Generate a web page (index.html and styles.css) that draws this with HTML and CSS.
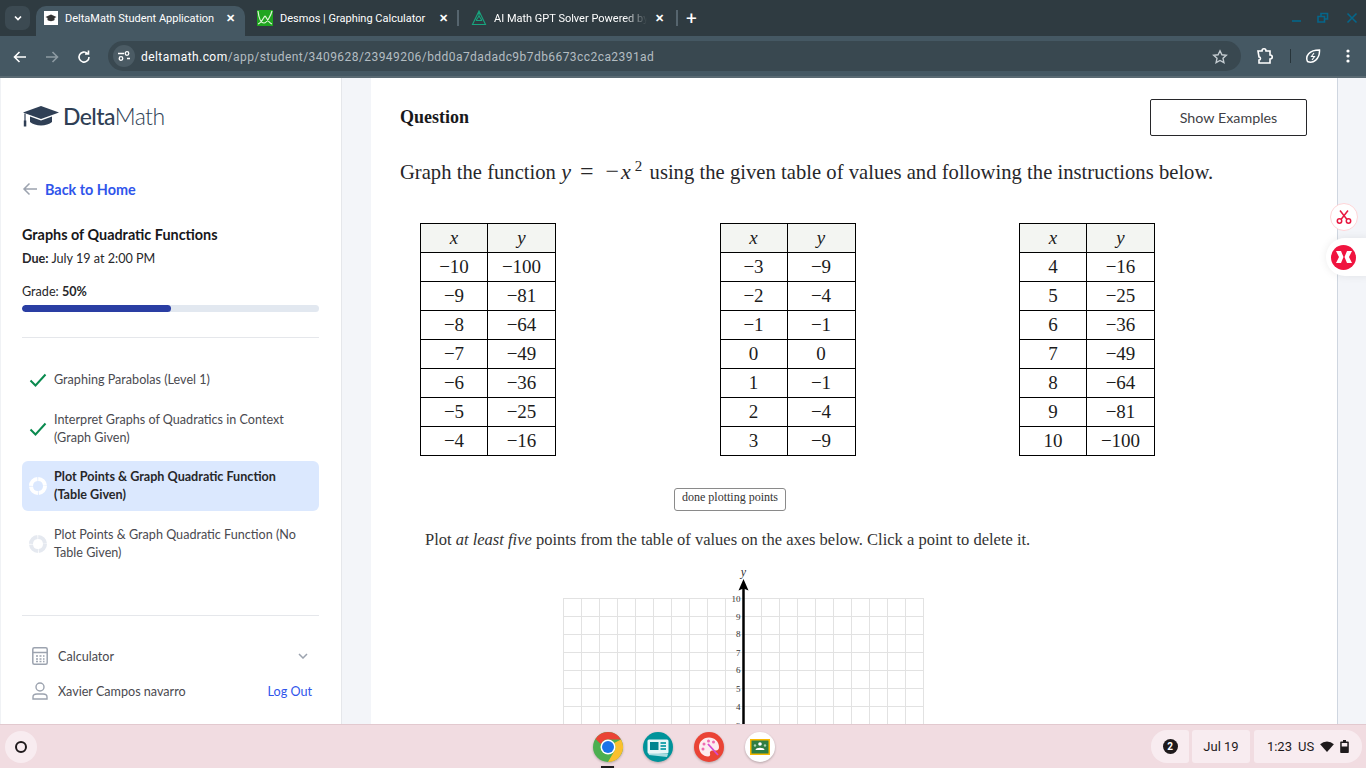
FILE: index.html
```html
<!DOCTYPE html>
<html lang="en">
<head>
    <meta charset="UTF-8">
    <meta name="viewport" content="width=device-width, initial-scale=1.0">
    <title>DeltaMath Student Application</title>
    <link rel="stylesheet" href="styles.css">
</head>
<body>
<div class="screen">
    <!-- Browser tabs -->
    <div class="tabstrip">
        <div class="tab-search">
            <svg width="10" height="10" viewBox="0 0 10 10"><path d="M2 3.500l3 3 3-3" fill="none" stroke="#fff" stroke-width="1.700"/></svg>
        </div>
        <div class="tab tab-active">
            <span class="favicon favicon-white">
                <svg width="12" height="10" viewBox="0 0 24 18"><path d="M12 2L1 7l4 2v4c3 3 11 3 14 0V9l4-2z" fill="#333"/></svg>
            </span>
            <span class="tab-title">DeltaMath Student Application</span>
            <span class="tab-close">&#10005;</span>
        </div>
        <div class="tab tab-desmos">
            <span class="favicon">
                <svg width="16" height="16" viewBox="0 0 16 16"><rect width="16" height="16" fill="#1fa51f"/><path d="M1 1c1 9 3 12 6 12S14 5 15 1M1 14c4-1 6-8 7-8s3 7 7 8" fill="none" stroke="#dff5d8" stroke-width="1.200"/></svg>
            </span>
            <span class="tab-title">Desmos | Graphing Calculator</span>
            <span class="tab-close">&#10005;</span>
        </div>
        <div class="tab-sep"></div>
        <div class="tab tab-ai">
            <span class="favicon">
                <svg width="16" height="16" viewBox="0 0 16 16"><path d="M8 1L1.500 14.500h13zM8 1v5M5 10.500h6M8 6l-3 4.500M8 6l3 4.500" fill="none" stroke="#18a57e" stroke-width="1.100"/></svg>
            </span>
            <span class="tab-title tab-fade">AI Math GPT Solver Powered by</span>
            <span class="tab-close">&#10005;</span>
        </div>
        <div class="tab-sep tab-sep-two"></div>
        <div class="tab-new">+</div>
        <div class="window-btns">
            <svg width="12" height="12" viewBox="0 0 12 12"><path d="M1 9h9" stroke="#05668a" stroke-width="1.600"/></svg>
            <svg width="12" height="12" viewBox="0 0 12 12"><path d="M1 4.500h6.500V10H1zM4 4V1.500h6.500V7H8" fill="none" stroke="#05668a" stroke-width="1.600"/></svg>
            <svg class="window-close" width="12" height="12" viewBox="0 0 12 12"><path d="M1.500 1.500l9 9M10.500 1.500l-9 9" stroke="#05668a" stroke-width="1.600"/></svg>
        </div>
    </div>

    <!-- Toolbar -->
    <div class="toolbar">
        <svg class="nav-icon" width="16" height="16" viewBox="0 0 16 16"><path d="M14 8H3M7.500 3L2.500 8l5 5" fill="none" stroke="#fff" stroke-width="1.600"/></svg>
        <svg class="nav-icon" width="16" height="16" viewBox="0 0 16 16"><path d="M2 8h11M8.500 3l5 5-5 5" fill="none" stroke="#8d9aa2" stroke-width="1.600"/></svg>
        <svg class="nav-icon" width="16" height="16" viewBox="0 0 16 16"><path d="M13 8a5 5 0 1 1-1.500-3.500M12.500 1.500V5H9" fill="none" stroke="#fff" stroke-width="1.600"/></svg>
        <div class="omnibox">
            <span class="site-info">
                <svg width="14" height="14" viewBox="0 0 14 14"><path d="M1 4.500h6M10 9.500h3" stroke="#fff" stroke-width="1.300"/><circle cx="10" cy="4.500" r="1.800" fill="none" stroke="#fff" stroke-width="1.300"/><circle cx="4" cy="9.500" r="1.800" fill="none" stroke="#fff" stroke-width="1.300"/></svg>
            </span>
            <span class="url"><span class="url-host">deltamath.com</span>/app/student/3409628/23949206/bdd0a7dadadc9b7db6673cc2ca2391ad</span>
            <svg class="star" width="16" height="16" viewBox="0 0 16 16"><path d="M8 1.800l1.900 4 4.400.5-3.300 3 .9 4.400L8 11.500l-3.900 2.200.9-4.400-3.300-3 4.400-.5z" fill="none" stroke="#c4ccd1" stroke-width="1.400"/></svg>
        </div>
        <svg class="puzzle" width="18" height="18" viewBox="0 0 18 18"><path d="M2 4h4c0-3 4-3 4 0h4v4c3 0 3 4 0 4v4H3v-3c2 0 2-3 0-3z" fill="none" stroke="#fff" stroke-width="1.600"/></svg>
        <div class="toolbar-sep"></div>
        <svg class="leaf" width="16" height="16" viewBox="0 0 16 16"><path d="M2.500 13.500C0 8 4 2 14.500 2 15 11 8 16 2.500 13.500z" fill="none" stroke="#fff" stroke-width="1.500"/><path d="M9 5L6.500 8.500h3L7 12" fill="none" stroke="#fff" stroke-width="1.100"/></svg>
        <svg class="dots" width="4" height="14" viewBox="0 0 4 14"><circle cx="2" cy="2" r="1.600" fill="#fff"/><circle cx="2" cy="7" r="1.600" fill="#fff"/><circle cx="2" cy="12" r="1.600" fill="#fff"/></svg>
    </div>

    <div class="page">
        <aside class="sidebar">
            <div class="logo">
                <svg width="38" height="22" viewBox="0 0 38 22"><path d="M19 1L1 7.500 19 14l18-6.500z" fill="#2f3f55"/><path d="M8 11.500V17c5 4.500 17 4.500 22 0v-5.500l-11 4z" fill="#2f3f55"/><path d="M3 8.500V16" stroke="#2f3f55" stroke-width="1.200"/><rect x="1.800" y="15.500" width="2.500" height="6" fill="#2f3f55"/></svg>
                <span class="logo-text"><span class="logo-strong">Delta</span>Math</span>
            </div>
            <a class="back-link">
                <svg width="16" height="14" viewBox="0 0 16 14"><path d="M15 7H2M7.500 1.500L2 7l5.500 5.500" fill="none" stroke="#9ca3af" stroke-width="1.500"/></svg>
                Back to Home
            </a>
            <h2 class="assign-title">Graphs of Quadratic Functions</h2>
            <div class="due"><b>Due:</b> July 19 at 2:00 PM</div>
            <div class="grade">Grade: <b>50%</b></div>
            <div class="progress"><div class="progress-fill" style="width: 50%"></div></div>

            <ul class="problem-list">
                <li class="problem">
                    <svg class="check" width="18" height="14" viewBox="0 0 18 14"><path d="M1.500 7.500l5 5L16.500 1.500" fill="none" stroke="#0a8a4f" stroke-width="2"/></svg>
                    <span>Graphing Parabolas (Level 1)</span>
                </li>
                <li class="problem">
                    <svg class="check" width="18" height="14" viewBox="0 0 18 14"><path d="M1.500 7.500l5 5L16.500 1.500" fill="none" stroke="#0a8a4f" stroke-width="2"/></svg>
                    <span>Interpret Graphs of Quadratics in Context (Graph Given)</span>
                </li>
                <li class="problem problem-active">
                    <svg class="ring" width="18" height="18" viewBox="0 0 18 18"><circle cx="9" cy="9" r="7" fill="none" stroke="#fff" stroke-width="4" stroke-dasharray="10.200 0.800"/></svg>
                    <span>Plot Points &amp; Graph Quadratic Function (Table Given)</span>
                </li>
                <li class="problem">
                    <svg class="ring" width="18" height="18" viewBox="0 0 18 18"><circle cx="9" cy="9" r="7" fill="none" stroke="#e5e9f0" stroke-width="4" stroke-dasharray="10.200 0.800"/></svg>
                    <span>Plot Points &amp; Graph Quadratic Function (No Table Given)</span>
                </li>
            </ul>

            <div class="side-footer">
                <div class="footer-row">
                    <svg width="16" height="18" viewBox="0 0 16 18"><rect x="0.800" y="0.800" width="14.400" height="16.400" rx="1.500" fill="none" stroke="#9ca3af" stroke-width="1.500"/><path d="M1 5.500h14" stroke="#9ca3af" stroke-width="1.500"/><path d="M4 9h2M7.500 9h2M11 9h1.500M4 12h2M7.500 12h2M11 12h1.500M4 14.500h2M7.500 14.500h2M11 14.500h1.500" stroke="#9ca3af" stroke-width="1.500"/></svg>
                    <span class="footer-label">Calculator</span>
                    <svg class="chevron" width="10" height="6" viewBox="0 0 10 6"><path d="M1 1l4 4 4-4" fill="none" stroke="#9ca3af" stroke-width="1.500"/></svg>
                </div>
                <div class="footer-row">
                    <svg width="16" height="18" viewBox="0 0 16 18"><circle cx="8" cy="5" r="4" fill="none" stroke="#9ca3af" stroke-width="1.400"/><path d="M1 17v-2c0-2 2-3 4-3h6c2 0 4 1 4 3v2z" fill="none" stroke="#9ca3af" stroke-width="1.400"/></svg>
                    <span class="footer-label">Xavier Campos navarro</span>
                    <a class="logout">Log Out</a>
                </div>
            </div>
        </aside>

        <main class="content">
            <div class="question-head">
                <h3>Question</h3>
                <button class="show-examples">Show Examples</button>
            </div>
            <p class="prompt">Graph the function <i>y</i><span class="eq">=</span><span class="minus">&minus;</span><i>x</i><sup>2</sup> using the given table of values and following the instructions below.</p>

            <div class="tables">
                <table class="values">
                    <tr><th><i>x</i></th><th><i>y</i></th></tr>
                    <tr><td>&minus;10</td><td>&minus;100</td></tr>
                    <tr><td>&minus;9</td><td>&minus;81</td></tr>
                    <tr><td>&minus;8</td><td>&minus;64</td></tr>
                    <tr><td>&minus;7</td><td>&minus;49</td></tr>
                    <tr><td>&minus;6</td><td>&minus;36</td></tr>
                    <tr><td>&minus;5</td><td>&minus;25</td></tr>
                    <tr><td>&minus;4</td><td>&minus;16</td></tr>
                </table>
                <table class="values">
                    <tr><th><i>x</i></th><th><i>y</i></th></tr>
                    <tr><td>&minus;3</td><td>&minus;9</td></tr>
                    <tr><td>&minus;2</td><td>&minus;4</td></tr>
                    <tr><td>&minus;1</td><td>&minus;1</td></tr>
                    <tr><td>0</td><td>0</td></tr>
                    <tr><td>1</td><td>&minus;1</td></tr>
                    <tr><td>2</td><td>&minus;4</td></tr>
                    <tr><td>3</td><td>&minus;9</td></tr>
                </table>
                <table class="values">
                    <tr><th><i>x</i></th><th><i>y</i></th></tr>
                    <tr><td>4</td><td>&minus;16</td></tr>
                    <tr><td>5</td><td>&minus;25</td></tr>
                    <tr><td>6</td><td>&minus;36</td></tr>
                    <tr><td>7</td><td>&minus;49</td></tr>
                    <tr><td>8</td><td>&minus;64</td></tr>
                    <tr><td>9</td><td>&minus;81</td></tr>
                    <tr><td>10</td><td>&minus;100</td></tr>
                </table>
            </div>

            <div class="done-row"><button class="done-btn">done plotting points</button></div>
            <p class="instructions">Plot <i>at least five</i> points from the table of values on the axes below. Click a point to delete it.</p>

            <svg class="graph" width="364" height="170" viewBox="0 -10 364 170">
                <g stroke="#e2e2e2" stroke-width="1">
                    <path d="M.5 28.500V160M18.500 28.500V160M36.500 28.500V160M54.500 28.500V160M72.500 28.500V160M90.500 28.500V160M108.500 28.500V160M126.500 28.500V160M144.500 28.500V160M162.500 28.500V160M198.500 28.500V160M216.500 28.500V160M234.500 28.500V160M252.500 28.500V160M270.500 28.500V160M288.500 28.500V160M306.500 28.500V160M324.500 28.500V160M342.500 28.500V160M360.500 28.500V160"/>
                    <path d="M0 28.500H361M0 46.500H361M0 64.500H361M0 82.500H361M0 100.500H361M0 118.500H361M0 136.500H361M0 154.500H361"/>
                </g>
                <path d="M180.500 14V160" stroke="#000" stroke-width="2.500"/>
                <path d="M180.500 9l-5 11.500 5-2 5 2z" fill="#000"/>
                <g class="graph-labels">
                    <text x="180.500" y="6" class="axis-name">y</text>
                    <text x="177.500" y="31.500" text-anchor="end">10</text>
                    <text x="177.500" y="50" text-anchor="end">9</text>
                    <text x="177.500" y="67" text-anchor="end">8</text>
                    <text x="177.500" y="86" text-anchor="end">7</text>
                    <text x="177.500" y="103" text-anchor="end">6</text>
                    <text x="177.500" y="122" text-anchor="end">5</text>
                    <text x="177.500" y="140" text-anchor="end">4</text>
                    <text x="177.500" y="159" text-anchor="end">3</text>
                </g>
            </svg>
        </main>

        <div class="right-band"></div>

        <!-- Floating extension buttons -->
        <div class="float-scissors">
            <svg width="16" height="16" viewBox="0 0 16 16"><g fill="none" stroke="#e8173f" stroke-width="1.500"><circle cx="3.500" cy="12" r="2.200"/><circle cx="12.500" cy="12" r="2.200"/><path d="M5 10.500L12 1.500M11 10.500L4 1.500"/></g></svg>
        </div>
        <div class="float-red">
            <div class="red-dot">
                <svg width="18" height="14" viewBox="0 0 18 14"><path d="M1 1h5l2.500 6L6 13H1l3-6zM17 1h-5L9.500 7l2.500 6h5l-3-6z" fill="#fff"/></svg>
            </div>
        </div>
    </div>

    <!-- ChromeOS shelf -->
    <footer class="shelf">
        <div class="launcher"><span class="launcher-ring"></span></div>
        <div class="shelf-apps">
            <div class="app app-current">
                <svg width="32" height="32" viewBox="0 0 32 32">
                    <circle cx="16" cy="16" r="15" fill="#4caf50"/>
                    <path d="M16 1a15 15 0 0 1 13 7.500H16a7.500 7.500 0 0 0-7 4.800L3.500 8A15 15 0 0 1 16 1z" fill="#ea4335"/>
                    <path d="M29 8.500A15 15 0 0 1 16 31l6.500-11.200A7.500 7.500 0 0 0 22 12z" fill="#fbc02d"/>
                    <circle cx="16" cy="16" r="7.500" fill="#fff"/>
                    <circle cx="16" cy="16" r="6" fill="#1a73e8"/>
                </svg>
            </div>
            <div class="app">
                <svg width="32" height="32" viewBox="0 0 32 32">
                    <circle cx="16" cy="16" r="15" fill="#00939a"/>
                    <path d="M6 21l1 3 18 2 1-3z" fill="#a7dce0"/>
                    <rect x="5.500" y="8.500" width="21" height="14" rx="1.500" fill="#e8f6f7"/>
                    <rect x="8" y="11" width="8.500" height="8" fill="#00838f"/>
                    <path d="M18.500 12h5.500M18.500 15h5.500M18.500 18h5.500" stroke="#26a6b0" stroke-width="1.800"/>
                </svg>
            </div>
            <div class="app">
                <svg width="32" height="32" viewBox="0 0 32 32">
                    <circle cx="16" cy="16" r="15" fill="#ea4335"/>
                    <path d="M16 6.500C10 6.500 6 11 6 16s4 9.500 9 9.500c2 0 2.500-1.500 2-3s.5-3 2.500-3H23c2 0 3-1.500 3-3.500 0-5.500-4.500-9.500-10-9.500z" fill="#fdecef"/>
                    <circle cx="11" cy="13" r="1.500" fill="#f06ab0"/>
                    <circle cx="15.500" cy="10" r="1.500" fill="#f06ab0"/>
                    <circle cx="20.500" cy="11" r="1.500" fill="#f06ab0"/>
                    <circle cx="10" cy="18" r="1.500" fill="#f06ab0"/>
                    <path d="M15 13l10 11" stroke="#d54ad0" stroke-width="1.800"/>
                </svg>
            </div>
            <div class="app">
                <svg width="32" height="32" viewBox="0 0 32 32">
                    <circle cx="16" cy="16" r="15" fill="#fff"/>
                    <rect x="6" y="8" width="20" height="16" fill="#f5b800"/>
                    <rect x="7.500" y="9.500" width="17" height="13" fill="#2e7d43"/>
                    <circle cx="16" cy="13" r="1.800" fill="#fff"/>
                    <path d="M11.500 19c0-3 9-3 9 0z" fill="#fff"/>
                    <circle cx="11" cy="14.500" r="1.200" fill="#a9d3b2"/>
                    <circle cx="21" cy="14.500" r="1.200" fill="#a9d3b2"/>
                </svg>
            </div>
        </div>
        <div class="tray">
            <div class="pill pill-left"><span class="badge">2</span></div>
            <div class="pill pill-date">Jul 19</div>
            <div class="pill pill-right">
                <span>1:23</span><span>US</span>
                <svg width="14" height="11" viewBox="0 0 15 12"><path d="M0 3.500a11 11 0 0 1 15 0L7.500 12z" fill="#1f1a1c"/></svg>
                <svg width="9" height="13" viewBox="0 0 9 13"><path d="M3 0h3v1.500h2a.8.800 0 0 1 .8.800v10a.8.800 0 0 1-.8.700H1a.8.800 0 0 1-.8-.700v-10A.8.800 0 0 1 1 1.500h2z" fill="#1f1a1c"/><rect x="1.700" y="3" width="5.600" height="3.500" fill="#f8ecf0"/></svg>
            </div>
        </div>
    </footer>
</div>
</body>
</html>
```

FILE: styles.css
```css
html, body {
    margin: 0;
    padding: 0;
    overflow: hidden;
}

.screen {
    width: 1366px;
    height: 768px;
    display: flex;
    flex-direction: column;
    overflow: hidden;
    background-color: #fff;
}

/* Browser tabs */
.tabstrip {
    height: 36px;
    flex: none;
    display: flex;
    align-items: flex-end;
    background-color: #2f3b41;
    font-family: Roboto, sans-serif;
    font-size: 11px;
    color: #fff;
    position: relative;
}

.tab-search {
    width: 25px;
    height: 24px;
    margin: 0 6px 6px 5px;
    border-radius: 7px;
    background-color: #3c4a52;
    display: flex;
    align-items: center;
    justify-content: center;
}

.tab {
    height: 30px;
    display: flex;
    align-items: center;
    box-sizing: border-box;
    padding-bottom: 6px;
}

.tab-active {
    width: 209px;
    padding-left: 8px;
    padding-right: 10px;
    background-color: #455863;
    border-radius: 10px 10px 0 0;
}

.tab-desmos {
    width: 212px;
    padding-left: 12px;
    padding-right: 9px;
}

.tab-ai {
    width: 212px;
    padding-left: 12px;
    padding-right: 7px;
}

.favicon {
    width: 16px;
    height: 16px;
    margin-right: 7px;
    flex: none;
    display: flex;
    align-items: center;
    justify-content: center;
}

.favicon-white {
    width: 14px;
    height: 14px;
    margin-right: 7px;
    background-color: #fff;
}

.tab-title {
    flex: 1;
    white-space: nowrap;
    overflow: hidden;
}

.tab-fade {
    -webkit-mask-image: linear-gradient(to right, #000 85%, transparent 100%);
    mask-image: linear-gradient(to right, #000 85%, transparent 100%);
}

.tab-close {
    font-size: 11px;
    font-weight: bold;
    flex: none;
    margin-left: 8px;
}

.tab-sep {
    width: 2px;
    height: 16px;
    margin-bottom: 10px;
    background-color: #56656e;
    flex: none;
}

.tab-sep-two {
    margin-left: 5px;
}

.tab-new {
    font-size: 19px;
    line-height: 26px;
    height: 30px;
    margin-left: 8px;
}

.window-btns {
    margin-left: auto;
    height: 36px;
    display: flex;
    align-items: center;
    gap: 14px;
    padding-right: 8px;
}

.window-close {
    margin-left: 3px;
}

/* Toolbar */
.toolbar {
    height: 42px;
    flex: none;
    box-sizing: border-box;
    display: flex;
    align-items: center;
    padding: 0 16px 0 12px;
    background-color: #455863;
    border-bottom: 2px solid #5a6a73;
}

.nav-icon {
    margin-right: 16px;
    margin-top: 1px;
    flex: none;
}

.omnibox {
    width: 1133px;
    height: 30px;
    border-radius: 15px;
    background-color: #394850;
    display: flex;
    align-items: center;
    flex: none;
    font-family: Roboto, sans-serif;
    font-size: 12px;
    color: #b4bdc2;
}

.site-info {
    width: 22px;
    height: 22px;
    margin: 0 6px 0 5px;
    border-radius: 50%;
    background-color: #4b5b64;
    display: flex;
    align-items: center;
    justify-content: center;
}

.url {
    letter-spacing: 0.44px;
    white-space: nowrap;
    padding-top: 1px;
}

.url-host {
    color: #fff;
}

.star {
    margin-left: auto;
    margin-right: 13px;
    margin-top: 1px;
}

.puzzle {
    margin-left: 15px;
    flex: none;
}

.toolbar-sep {
    width: 1px;
    height: 14px;
    margin: 0 16px;
    background-color: #27343a;
    flex: none;
}

.leaf {
    flex: none;
    margin-left: -2px;
}

.dots {
    margin-left: 25px;
    flex: none;
}

/* Page area */
.page {
    flex: 1;
    display: flex;
    position: relative;
    overflow: hidden;
    background-color: #f3f5f9;
    min-height: 0;
}

.sidebar {
    width: 342px;
    flex: none;
    box-sizing: border-box;
    padding: 0 22px 0 21px;
    background-color: #fff;
    border-left: 1px solid #f0f2f5;
    border-right: 1px solid #e5e7eb;
    font-family: Lato, sans-serif;
    color: #4a4a50;
    font-size: 12.600px;
    display: flex;
    flex-direction: column;
}

.logo {
    height: 24px;
    margin-top: 26px;
    display: flex;
    align-items: center;
    gap: 3px;
    color: #2f3f55;
}

.logo-text {
    font-size: 23px;
    font-weight: 300;
    letter-spacing: -0.6px;
}

.logo-strong {
    font-weight: 500;
}

.back-link {
    margin-top: 50px;
    height: 22px;
    display: flex;
    align-items: center;
    gap: 7px;
    color: #2f55eb;
    font-size: 14.400px;
    font-weight: 700;
}

.assign-title {
    margin: 25px 0 0;
    font-size: 14.400px;
    line-height: 20px;
    font-weight: 700;
    color: #18181b;
}

.due {
    margin-top: 5px;
    line-height: 18px;
    color: #27272a;
}

.grade {
    margin-top: 15px;
    line-height: 18px;
    color: #27272a;
}

.progress {
    height: 7px;
    margin-top: 4px;
    border-radius: 4px;
    background-color: #e2e8f0;
    overflow: hidden;
}

.progress-fill {
    height: 100%;
    border-radius: 4px;
    background-color: #2a3ea3;
}

.problem-list {
    list-style: none;
    margin: 25px 0 0;
    padding: 26px 0 0;
    border-top: 1px solid #e5e7eb;
    display: flex;
    flex-direction: column;
    gap: 8px;
}

.problem {
    display: flex;
    align-items: center;
    padding: 7px 20px 7px 7px;
    line-height: 18px;
    border-radius: 6px;
}

.problem-active {
    margin-top: -1px;
    background-color: #dbe8fe;
    font-weight: 700;
    color: #27272a;
}

.problem svg {
    width: 18px;
    flex: none;
    margin-right: 7px;
}

.side-footer {
    margin-top: 46px;
    padding-top: 31px;
    border-top: 1px solid #e5e7eb;
    display: flex;
    flex-direction: column;
    gap: 17px;
}

.footer-row {
    height: 18px;
    display: flex;
    align-items: center;
    padding: 0 7px 0 10px;
}

.footer-label {
    margin-left: 10px;
    flex: 1;
}

.chevron {
    margin-right: 4px;
}

.logout {
    color: #2f55eb;
}

/* Question */
.content {
    width: 966px;
    margin-left: 29px;
    box-sizing: border-box;
    flex: none;
    padding: 21px 30px 0 29px;
    background-color: #fff;
    font-family: "Liberation Serif", serif;
    color: #27272a;
}

.question-head {
    height: 37px;
    display: flex;
    align-items: center;
    justify-content: space-between;
}

.question-head h3 {
    margin: 0;
    font-size: 18px;
    font-weight: 700;
    color: #18181b;
}

.show-examples {
    width: 157px;
    height: 37px;
    border: 1px solid #27272a;
    border-radius: 2px;
    background-color: #fff;
    font-family: Lato, sans-serif;
    font-size: 14.300px;
    color: #3f3f46;
}

.prompt {
    margin: 21px 0 0;
    font-size: 20.600px;
    line-height: 30px;
    white-space: nowrap;
    word-spacing: 0.15px;
}

.prompt i {
    font-size: 22px;
    letter-spacing: 1px;
}

.prompt sup {
    font-size: 15px;
    line-height: 0;
    margin-left: 3px;
    margin-right: 2px;
}

.eq {
    margin: 0 9px 0 8px;
    font-size: 24px;
    line-height: 0;
}

.minus {
    font-size: 24px;
    line-height: 0;
    margin-left: 3px;
    margin-right: 2px;
}

.tables {
    margin-top: 36px;
    padding-left: 20px;
    display: flex;
    gap: 163.500px;
}

.values {
    border-collapse: collapse;
    font-size: 19px;
    color: #1c1c1c;
}

.values th, .values td {
    width: 67px;
    height: 28px;
    padding: 0;
    border: 1px solid #000;
    text-align: center;
    font-weight: 400;
}

.values th:first-child, .values td:first-child {
    width: 66px;
}

.values th {
    background-color: #f3f5f2;
}

.done-row {
    margin-top: 31px;
    padding-left: 274px;
}

.done-btn {
    width: 112px;
    height: 23px;
    padding: 0 0 4px;
    border: 1px solid #8a8a8a;
    border-radius: 3px;
    background-color: #fff;
    font-family: "Liberation Serif", serif;
    font-size: 12px;
    color: #333;
}

.instructions {
    margin: 19px 0 0;
    padding-left: 25px;
    font-size: 16.500px;
    line-height: 20px;
    color: #333;
}

.graph {
    display: block;
    margin: 10px 0 0 163px;
}

.graph-labels text {
    font-family: "Liberation Serif", serif;
    font-size: 9px;
    fill: #333;
}

.graph-labels .axis-name {
    font-size: 12px;
    font-style: italic;
    text-anchor: middle;
}

.right-band {
    flex: 1;
    border-left: 1px solid #cfd6e0;
}

.float-scissors {
    position: absolute;
    left: 1330px;
    top: 125px;
    width: 28px;
    height: 28px;
    box-sizing: border-box;
    border: 1px solid #ffd5d8;
    border-radius: 50%;
    background-color: #fff;
    display: flex;
    align-items: center;
    justify-content: center;
}

.float-red {
    position: absolute;
    left: 1326px;
    top: 160px;
    width: 44px;
    height: 38px;
    border-radius: 19px 0 0 19px;
    background-color: #fff;
    box-shadow: 0 0 8px rgba(0, 0, 0, 0.08);
    display: flex;
    align-items: center;
    padding-left: 5px;
    box-sizing: border-box;
}

.red-dot {
    width: 25px;
    height: 25px;
    border-radius: 50%;
    background-color: #f0143f;
    display: flex;
    align-items: center;
    justify-content: center;
}

/* Shelf */
.shelf {
    height: 44px;
    flex: none;
    box-sizing: border-box;
    display: flex;
    align-items: center;
    background-color: #f1dce1;
    border-top: 1px solid #e2c9cf;
    font-family: Roboto, sans-serif;
    font-size: 13px;
    color: #1f1a1c;
    position: relative;
}

.launcher {
    width: 32px;
    height: 32px;
    margin-left: 5px;
    border-radius: 50%;
    background-color: #f8ecf0;
    display: flex;
    align-items: center;
    justify-content: center;
    flex: none;
}

.launcher-ring {
    width: 8px;
    height: 8px;
    border: 2.500px solid #1f1a1c;
    border-radius: 50%;
}

.shelf-apps {
    display: flex;
    gap: 19px;
    margin-left: 555px;
    flex: none;
}

.app {
    width: 32px;
    height: 32px;
    border-radius: 50%;
    filter: drop-shadow(0 1px 1px rgba(0, 0, 0, 0.25));
    position: relative;
}

.app-current {
    margin-right: -1px;
}

.app-current::after {
    content: "";
    position: absolute;
    left: 9px;
    top: 35px;
    width: 13px;
    height: 2px;
    background-color: #1f1a1c;
}

.tray {
    margin-left: auto;
    margin-right: 4px;
    display: flex;
    gap: 3px;
}

.pill {
    height: 33px;
    display: flex;
    align-items: center;
    justify-content: center;
    background-color: #f8ecf0;
    border-radius: 3px;
}

.pill-left {
    width: 38px;
    border-radius: 16px 3px 3px 16px;
}

.pill-date {
    width: 58px;
}

.pill-right {
    width: 108px;
    margin-left: 1px;
    gap: 6px;
    border-radius: 3px 16px 16px 3px;
}

.badge {
    width: 15px;
    height: 15px;
    border-radius: 50%;
    background-color: #1f1a1c;
    color: #fff;
    font-size: 10px;
    font-weight: 700;
    line-height: 15px;
    text-align: center;
}
```
